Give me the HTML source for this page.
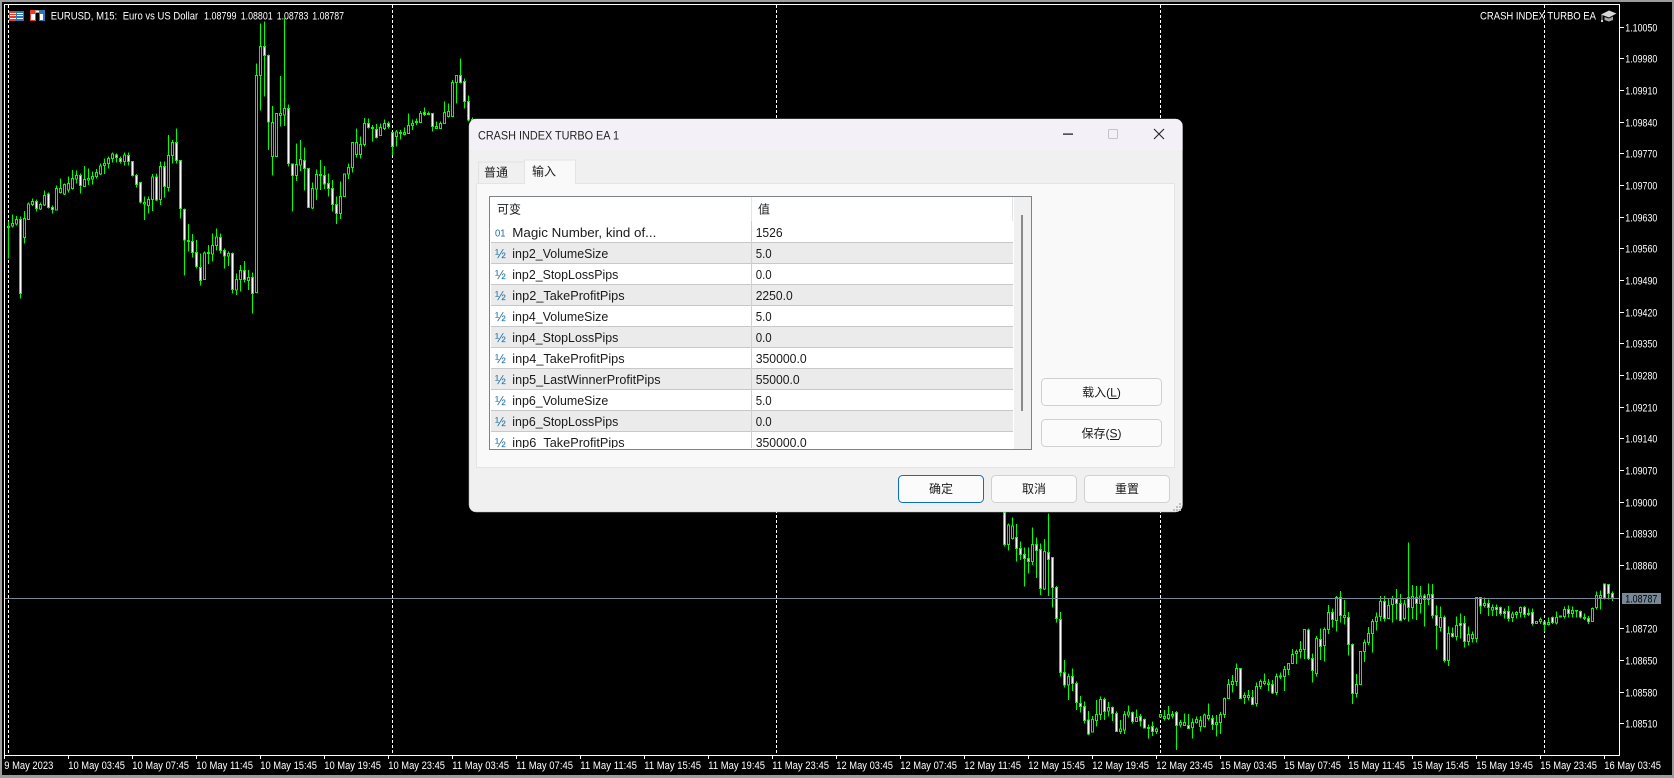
<!DOCTYPE html>
<html lang="zh"><head><meta charset="utf-8"><title>EURUSD M15</title>
<style>
html,body{margin:0;padding:0;background:#000;width:1674px;height:778px;overflow:hidden}
svg{display:block}
text{font-family:"Liberation Sans","Noto Sans CJK SC",sans-serif}
.a{fill:#fff;font-size:11px}
.d{fill:#1a1a1a;font-size:12px}
.r{fill:#1a1a1a;font-size:12.5px}
.i{fill:#1c6ea4;font-size:13px}
.wk{fill:none;stroke:#0f0;stroke-width:3}
.bw{fill:#fff;stroke:#0f0;stroke-width:3}
.bh{fill:#000;stroke:#0f0;stroke-width:3}
</style></head><body>
<svg width="1674" height="778" viewBox="0 0 1674 778" xmlns="http://www.w3.org/2000/svg">
<defs>
<clipPath id="lc"><rect x="491" y="197" width="522" height="251"/></clipPath>
<clipPath id="cc"><rect x="5" y="5" width="1614" height="750"/></clipPath>
</defs>
<rect width="1674" height="778" fill="#9c9c9c"/>
<rect x="2" y="2" width="1670" height="773" fill="#000"/>

<!-- grid -->
<path d="M8.5 5V755M392.5 5V755M776.5 5V755M1160.5 5V755M1544.5 5V755" stroke="#fff" stroke-width="1" stroke-dasharray="3 2" fill="none" shape-rendering="crispEdges"/>

<!-- candles -->
<g clip-path="url(#cc)" shape-rendering="crispEdges">
<g transform="translate(.167 0) scale(.33333)">
<path class="wk" d="M25 665V775M37 643V683M49 648V676M61 650V895M73 633V730M85 608V660M97 595V618M109 598V635M121 608V630M133 572V618M145 578V625M157 616V640M169 556V632M181 535V580M193 550V585M205 530V578M217 510V568M229 512V550M241 520V580M253 498V560M265 505V555M277 515V553M289 507V535M301 490V525M313 475V522M325 470V505M337 457V487M349 460V488M361 470V490M373 458V497M385 458V497M397 483V530M409 522V563M421 546V610M433 590V660M445 590V640M457 522V633M469 520V603M481 485V615M493 485V592M505 405V575M517 420V490M529 385V490M541 481V655M553 625V827M565 672V755M577 702V772M589 720V805M601 760V857M613 755V838M625 735V792M637 700V785M649 685V752M661 700V760M673 745V805M685 755V798M697 758V880M709 820V885M721 795V875M733 783V848M745 810V870M757 817V940M769 190V878M781 70V332M793 65V290M805 163V450M817 318V527M829 340V470M841 228V380M853 55V378M865 313V500M877 490V635M889 430V543M901 420V513M913 442V572M925 505V622M937 548V627M949 508V600M961 480V570M973 498V567M985 520V590M997 540V635M1009 590V672M1021 545V657M1033 520V590M1045 490V537M1057 427V517M1069 385V473M1081 410V475M1093 354V440M1105 355V385M1117 375V425M1129 372V415M1141 370V407M1153 358V390M1165 365V385M1177 397V465M1189 390V440M1201 390V418M1213 383V407M1225 340V400M1237 358V390M1249 355V375M1261 333V367M1273 322V348M1285 335V345M1297 340V395M1309 365V387M1321 365V385M1333 305V370M1345 310V352M1357 240V350M1369 226V310M1381 175V250M1393 235V325M1405 287V365M1417 352V370"/>
<path class="bw" d="M58 658V880h6V658zM106 604V625h6V604zM142 582V623h6V582zM154 622V628h6V622zM238 526V557h6V526zM346 465V473h6V465zM358 475V484h6V475zM382 466V485h6V466zM394 485V527h6V485zM406 526V553h6V526zM418 548V606h6V548zM466 531V600h6V531zM490 499V559h6V499zM526 427V482h6V427zM538 482V625h6V482zM550 628V720h6V628zM562 721V725h6V721zM574 725V757h6V725zM586 758V800h6V758zM598 802V842h6V802zM658 712V752h6V712zM670 752V768h6V752zM694 760V868h6V760zM730 811V838h6V811zM754 832V880h6V832zM790 140V166h6V140zM802 166V366h6V166zM862 325V490h6V325zM874 492V527h6V492zM910 481V506h6V481zM922 506V622h6V506zM970 526V552h6V526zM982 550V565h6V550zM994 566V613h6V566zM1006 613V640h6V613zM1102 370V382h6V370zM1126 388V412h6V388zM1162 370V380h6V370zM1174 397V440h6V397zM1270 338V344h6V338zM1294 341V380h6V341zM1378 226V248h6V226zM1390 245V305h6V245zM1402 305V360h6V305z"/>
<path class="bh" d="M22 680V682h6V680zM34 670V678h6V670zM46 658V672h6V658zM70 655V712h6V655zM82 612V658h6V612zM94 604V614h6V604zM118 613V627h6V613zM130 586V615h6V586zM166 565V630h6V565zM178 566V578h6V566zM190 553V582h6V553zM202 550V570h6V550zM214 535V566h6V535zM226 527V537h6V527zM250 538V560h6V538zM262 535V540h6V535zM274 530V537h6V530zM286 517V530h6V517zM298 498V522h6V498zM310 490V497h6V490zM322 475V490h6V475zM334 462V475h6V462zM370 465V485h6V465zM430 607V612h6V607zM442 598V617h6V598zM454 531V599h6V531zM478 499V598h6V499zM502 466V562h6V466zM514 427V467h6V427zM610 759V838h6V759zM622 757V760h6V757zM634 737V762h6V737zM646 711V737h6V711zM682 760V768h6V760zM706 838V870h6V838zM718 812V838h6V812zM742 832V842h6V832zM766 226V878h6V226zM778 140V226h6V140zM814 367V470h6V367zM826 340V470h6V340zM838 340V346h6V340zM850 325V345h6V325zM886 493V527h6V493zM898 478V495h6V478zM934 565V624h6V565zM946 523V567h6V523zM958 523V527h6V523zM1018 590V640h6V590zM1030 522V590h6V522zM1042 503V522h6V503zM1054 427V503h6V427zM1066 428V464h6V428zM1078 433V464h6V433zM1090 370V433h6V370zM1114 382V385h6V382zM1138 382V407h6V382zM1150 370V385h6V370zM1186 396V410h6V396zM1198 398V400h6V398zM1210 397V403h6V397zM1222 377V400h6V377zM1234 370V376h6V370zM1246 365V367h6V365zM1258 340V367h6V340zM1282 340V344h6V340zM1306 379V385h6V379zM1318 370V385h6V370zM1330 338V370h6V338zM1342 335V350h6V335zM1354 247V350h6V247zM1366 226V247h6V226zM1414 358V370h6V358z"/>
</g>
<g transform="translate(995.167 510) scale(.33333)">
<path class="wk" d="M28 0V110M40 40V122M52 22V88M64 42V155M76 95V150M88 112V230M100 113V190M112 52V165M124 82V204M136 100V255M148 87V240M160 10V258M172 142V293M184 228V338M196 306V500M208 450V533M220 490V570M232 475V543M244 515V600M256 558V608M268 575V640M280 603V675M292 618V668M304 570V650M316 560V630M328 563V630M340 576V620M352 590V633M364 605V665M376 630V672M388 603V672M400 586V622M412 605V640M424 598V636M436 612V650M448 625V656M460 643V686M472 635V678M484 653V672M496 612V622M508 600V632M520 588V630M532 603V625M544 603V720M556 630V653M568 610V648M580 612V657M592 625V686M604 620V640M616 618V665M628 610V652"/>
<path class="bw" d="M25 8V104h6V8zM61 82V115h6V82zM73 115V134h6V115zM85 133V146h6V133zM97 145V155h6V145zM121 103V122h6V103zM133 118V235h6V118zM157 127V149h6V127zM169 142V233h6V142zM181 232V326h6V232zM193 328V488h6V328zM205 487V525h6V487zM229 499V521h6V499zM241 520V578h6V520zM253 580V590h6V580zM265 589V632h6V589zM277 630V672h6V630zM325 568V605h6V568zM349 592V610h6V592zM361 610V665h6V610zM409 607V635h6V607zM433 619V633h6V619zM445 628V654h6V628zM457 652V656h6V652zM469 649V665h6V649zM541 607V647h6V607zM577 647V655h6V647z"/>
<path class="bh" d="M37 45V104h6V45zM49 48V86h6V48zM109 103V155h6V103zM145 124V237h6V124zM217 499V525h6V499zM289 628V666h6V628zM301 613V632h6V613zM313 568V613h6V568zM337 592V603h6V592zM373 657V665h6V657zM385 613V660h6V613zM397 606V615h6V606zM421 622V635h6V622zM481 657V665h6V657zM493 613V621h6V613zM505 619V626h6V619zM517 613V626h6V613zM529 613V618h6V613zM553 637V645h6V637zM565 637V647h6V637zM589 637V653h6V637zM601 629V638h6V629zM613 631V650h6V631zM625 615V650h6V615z"/>
</g>
<g transform="translate(1205.167 510) scale(.33333)">
<path class="wk" d="M10 580V632M22 615V660M34 615V680M46 606V672M58 562V624M70 507V567M82 495V548M94 460V528M106 474V566M118 547V582M130 540V572M142 540V584M154 517V590M166 508V537M178 490V525M190 507V543M202 510V552M214 490V555M226 487V507M238 468V543M250 460V495M262 417V462M274 418V462M286 393V445M298 357V447M310 355V450M322 430V518M334 378V500M346 355V450M358 353V455M370 285V372M382 295V353M394 258V365M406 243V338M418 270V343M430 306V437M442 400V582M454 492V563M466 424V523M478 388V456M490 351V405M502 327V428M514 307V362M526 258V333M538 258V335M550 265V326M562 258V338M574 237V328M586 252V332M598 270V330M610 98V335M622 225V327M634 252V329"/>
<path class="bw" d="M19 625V644h6V625zM103 475V566h6V475zM139 562V584h6V562zM199 523V549h6V523zM307 360V446h6V360zM319 446V482h6V446zM343 389V409h6V389zM379 307V329h6V307zM403 263V317h6V263zM427 322V403h6V322zM439 403V550h6V403zM535 275V326h6V275zM571 267V281h6V267zM583 281V332h6V281zM607 263V292h6V263zM631 263V281h6V263z"/>
<path class="bh" d="M7 616V626h6V616zM31 637V644h6V637zM43 613V638h6V613zM55 565V613h6V565zM67 523V566h6V523zM79 514V524h6V514zM91 475V515h6V475zM115 556V563h6V556zM127 556V563h6V556zM151 529V581h6V529zM163 514V530h6V514zM175 514V521h6V514zM187 519V524h6V519zM211 499V548h6V499zM223 498V501h6V498zM235 478V500h6V478zM247 460V479h6V460zM259 433V461h6V433zM271 424V431h6V424zM283 418V425h6V418zM295 358V419h6V358zM331 385V491h6V385zM355 358V407h6V358zM367 307V358h6V307zM391 263V331h6V263zM415 316V323h6V316zM451 523V551h6V523zM463 424V523h6V424zM475 397V425h6V397zM487 370V398h6V370zM499 334V371h6V334zM511 321V334h6V321zM523 275V320h6V275zM547 286V326h6V286zM559 267V283h6V267zM595 282V326h6V282zM619 260V292h6V260z"/>
</g>
<g transform="translate(1415.167 510) scale(.33333)">
<path class="wk" d="M4 228V330M16 228V310M28 252V350M40 220V285M52 222V325M64 286V418M76 290V365M88 317V458M100 350V468M112 352V383M124 320V392M136 310V385M148 318V413M160 350V407M172 365V397M184 262V398M196 262V312M208 262V293M220 268V318M232 283V318M244 284V318M256 290V316M268 295V325M280 288V335M292 305V336M304 303V325M316 290V322M328 288V322M340 295V318M352 296V347M364 334V342M376 322V342M388 335V365M400 322V346M412 320V342M424 305V343M436 318V323M448 290V325M460 287V322M472 290V322M484 300V322M496 302V325M508 310V330M520 318V342M532 292V335M544 245V298M556 242V298M568 220V268M580 222V268M592 245V273"/>
<path class="bw" d="M1 262V281h6V262zM25 258V268h6V258zM49 253V316h6V253zM61 317V347h6V317zM85 322V452h6V322zM109 370V380h6V370zM133 340V347h6V340zM145 340V395h6V340zM193 262V288h6V262zM217 280V292h6V280zM241 292V299h6V292zM253 292V311h6V292zM265 305V310h6V305zM277 305V326h6V305zM325 292V314h6V292zM337 310V314h6V310zM349 307V341h6V307zM385 336V344h6V336zM409 323V338h6V323zM457 298V311h6V298zM493 304V321h6V304zM505 322V326h6V322zM517 325V335h6V325zM565 222V264h6V222zM577 224V250h6V224zM589 250V263h6V250z"/>
<path class="bh" d="M13 258V281h6V258zM37 253V268h6V253zM73 322V352h6V322zM97 370V452h6V370zM121 346V380h6V346zM157 373V395h6V373zM169 373V386h6V373zM181 262V386h6V262zM205 280V287h6V280zM229 292V300h6V292zM289 312V323h6V312zM301 307V314h6V307zM313 292V308h6V292zM361 335V340h6V335zM373 328V335h6V328zM397 338V344h6V338zM421 322V339h6V322zM433 318V321h6V318zM445 298V320h6V298zM469 301V310h6V301zM481 301V303h6V301zM529 295V335h6V295zM541 256V292h6V256zM553 256V263h6V256z"/>
</g>
</g>

<!-- price line -->
<rect x="5" y="598" width="1614" height="1" fill="#778899"/>

<!-- axes -->
<g shape-rendering="crispEdges" fill="none" stroke="#fff" stroke-width="1">
<path d="M4.5 755.5V4.5H1619.5V755.5H4.5"/>
<path d="M4.5 755V759M68.5 755V759M132.5 755V759M196.5 755V759M260.5 755V759M324.5 755V759M388.5 755V759M452.5 755V759M516.5 755V759M580.5 755V759M644.5 755V759M708.5 755V759M772.5 755V759M836.5 755V759M900.5 755V759M964.5 755V759M1028.5 755V759M1092.5 755V759M1156.5 755V759M1220.5 755V759M1284.5 755V759M1348.5 755V759M1412.5 755V759M1476.5 755V759M1540.5 755V759M1604.5 755V759"/>
<path d="M1620 27.5h4M1620 58.5h4M1620 90.5h4M1620 122.5h4M1620 153.5h4M1620 185.5h4M1620 217.5h4M1620 248.5h4M1620 280.5h4M1620 312.5h4M1620 343.5h4M1620 375.5h4M1620 407.5h4M1620 438.5h4M1620 470.5h4M1620 502.5h4M1620 533.5h4M1620 565.5h4M1620 628.5h4M1620 660.5h4M1620 692.5h4M1620 723.5h4"/>
</g>

<!-- price labels -->
<text x="1625.3" y="31.3" textLength="32" lengthAdjust="spacingAndGlyphs" class="a">1.10050</text>
<text x="1625.3" y="62.3" textLength="32" lengthAdjust="spacingAndGlyphs" class="a">1.09980</text>
<text x="1625.3" y="94.3" textLength="32" lengthAdjust="spacingAndGlyphs" class="a">1.09910</text>
<text x="1625.3" y="126.3" textLength="32" lengthAdjust="spacingAndGlyphs" class="a">1.09840</text>
<text x="1625.3" y="157.3" textLength="32" lengthAdjust="spacingAndGlyphs" class="a">1.09770</text>
<text x="1625.3" y="189.3" textLength="32" lengthAdjust="spacingAndGlyphs" class="a">1.09700</text>
<text x="1625.3" y="221.3" textLength="32" lengthAdjust="spacingAndGlyphs" class="a">1.09630</text>
<text x="1625.3" y="252.3" textLength="32" lengthAdjust="spacingAndGlyphs" class="a">1.09560</text>
<text x="1625.3" y="284.3" textLength="32" lengthAdjust="spacingAndGlyphs" class="a">1.09490</text>
<text x="1625.3" y="316.3" textLength="32" lengthAdjust="spacingAndGlyphs" class="a">1.09420</text>
<text x="1625.3" y="347.7" textLength="32" lengthAdjust="spacingAndGlyphs" class="a">1.09350</text>
<text x="1625.3" y="379.3" textLength="32" lengthAdjust="spacingAndGlyphs" class="a">1.09280</text>
<text x="1625.3" y="411.3" textLength="32" lengthAdjust="spacingAndGlyphs" class="a">1.09210</text>
<text x="1625.3" y="442.3" textLength="32" lengthAdjust="spacingAndGlyphs" class="a">1.09140</text>
<text x="1625.3" y="474.3" textLength="32" lengthAdjust="spacingAndGlyphs" class="a">1.09070</text>
<text x="1625.3" y="506.3" textLength="32" lengthAdjust="spacingAndGlyphs" class="a">1.09000</text>
<text x="1625.3" y="537.3" textLength="32" lengthAdjust="spacingAndGlyphs" class="a">1.08930</text>
<text x="1625.3" y="569.3" textLength="32" lengthAdjust="spacingAndGlyphs" class="a">1.08860</text>
<text x="1625.3" y="632.3" textLength="32" lengthAdjust="spacingAndGlyphs" class="a">1.08720</text>
<text x="1625.3" y="664.3" textLength="32" lengthAdjust="spacingAndGlyphs" class="a">1.08650</text>
<text x="1625.3" y="696.3" textLength="32" lengthAdjust="spacingAndGlyphs" class="a">1.08580</text>
<text x="1625.3" y="727.3" textLength="32" lengthAdjust="spacingAndGlyphs" class="a">1.08510</text>
<rect x="1622" y="593" width="39" height="11" fill="#778899"/>
<text x="1625.3" y="602.5" textLength="32" lengthAdjust="spacingAndGlyphs" style="font-size:11px;fill:#000">1.08787</text>

<!-- time labels -->
<text class="a" lengthAdjust="spacingAndGlyphs" x="4.3" y="769" textLength="49">9 May 2023</text>
<text class="a" lengthAdjust="spacingAndGlyphs" x="68.3" y="769" textLength="56.7">10 May 03:45</text>
<text class="a" lengthAdjust="spacingAndGlyphs" x="132.3" y="769" textLength="56.7">10 May 07:45</text>
<text class="a" lengthAdjust="spacingAndGlyphs" x="196.3" y="769" textLength="56.7">10 May 11:45</text>
<text class="a" lengthAdjust="spacingAndGlyphs" x="260.3" y="769" textLength="56.7">10 May 15:45</text>
<text class="a" lengthAdjust="spacingAndGlyphs" x="324.3" y="769" textLength="56.7">10 May 19:45</text>
<text class="a" lengthAdjust="spacingAndGlyphs" x="388.3" y="769" textLength="56.7">10 May 23:45</text>
<text class="a" lengthAdjust="spacingAndGlyphs" x="452.3" y="769" textLength="56.7">11 May 03:45</text>
<text class="a" lengthAdjust="spacingAndGlyphs" x="516.3" y="769" textLength="56.7">11 May 07:45</text>
<text class="a" lengthAdjust="spacingAndGlyphs" x="580.3" y="769" textLength="56.7">11 May 11:45</text>
<text class="a" lengthAdjust="spacingAndGlyphs" x="644.3" y="769" textLength="56.7">11 May 15:45</text>
<text class="a" lengthAdjust="spacingAndGlyphs" x="708.3" y="769" textLength="56.7">11 May 19:45</text>
<text class="a" lengthAdjust="spacingAndGlyphs" x="772.3" y="769" textLength="56.7">11 May 23:45</text>
<text class="a" lengthAdjust="spacingAndGlyphs" x="836.3" y="769" textLength="56.7">12 May 03:45</text>
<text class="a" lengthAdjust="spacingAndGlyphs" x="900.3" y="769" textLength="56.7">12 May 07:45</text>
<text class="a" lengthAdjust="spacingAndGlyphs" x="964.3" y="769" textLength="56.7">12 May 11:45</text>
<text class="a" lengthAdjust="spacingAndGlyphs" x="1028.3" y="769" textLength="56.7">12 May 15:45</text>
<text class="a" lengthAdjust="spacingAndGlyphs" x="1092.3" y="769" textLength="56.7">12 May 19:45</text>
<text class="a" lengthAdjust="spacingAndGlyphs" x="1156.3" y="769" textLength="56.7">12 May 23:45</text>
<text class="a" lengthAdjust="spacingAndGlyphs" x="1220.3" y="769" textLength="56.7">15 May 03:45</text>
<text class="a" lengthAdjust="spacingAndGlyphs" x="1284.3" y="769" textLength="56.7">15 May 07:45</text>
<text class="a" lengthAdjust="spacingAndGlyphs" x="1348.3" y="769" textLength="56.7">15 May 11:45</text>
<text class="a" lengthAdjust="spacingAndGlyphs" x="1412.3" y="769" textLength="56.7">15 May 15:45</text>
<text class="a" lengthAdjust="spacingAndGlyphs" x="1476.3" y="769" textLength="56.7">15 May 19:45</text>
<text class="a" lengthAdjust="spacingAndGlyphs" x="1540.3" y="769" textLength="56.7">15 May 23:45</text>
<text class="a" lengthAdjust="spacingAndGlyphs" x="1604.3" y="769" textLength="56.7">16 May 03:45</text>

<!-- header icons and text -->
<g shape-rendering="crispEdges">
<rect x="9" y="11" width="8" height="10" fill="#e63c28"/>
<rect x="16" y="11" width="8" height="10" fill="#2a78b8"/>
<path d="M10 13h6v1h-6zM10 15h6v1h-6zM10 18h6v1h-6zM17 13h6v1h-6zM17 15h6v1h-6zM17 18h6v1h-6z" fill="#fff"/>
<rect x="30" y="10" width="6" height="11" fill="#e63c28"/>
<rect x="31" y="14" width="4" height="6" fill="#fff"/>
<rect x="35" y="10" width="5" height="3" fill="#9a9a9a"/>
<rect x="36" y="11" width="3" height="1" fill="#fff"/>
<rect x="39" y="10" width="6" height="11" fill="#2a78b8"/>
<rect x="40" y="14" width="3" height="6" fill="#fff"/>
</g>
<text class="a" lengthAdjust="spacingAndGlyphs" x="50.7" y="19.5" textLength="66.5">EURUSD, M15:</text>
<text class="a" lengthAdjust="spacingAndGlyphs" x="122.7" y="19.5" textLength="75.5">Euro vs US Dollar</text>
<text class="a" lengthAdjust="spacingAndGlyphs" x="204" y="19.5" textLength="32.5">1.08799</text>
<text class="a" lengthAdjust="spacingAndGlyphs" x="240.7" y="19.5" textLength="32">1.08801</text>
<text class="a" lengthAdjust="spacingAndGlyphs" x="276.7" y="19.5" textLength="31.7">1.08783</text>
<text class="a" lengthAdjust="spacingAndGlyphs" x="312.3" y="19.5" textLength="31.7">1.08787</text>
<text class="a" lengthAdjust="spacingAndGlyphs" x="1480" y="19.5" textLength="116">CRASH INDEX TURBO EA</text>
<path d="M1601 14.5L1609 10.5L1616.5 13.5L1609 17.5Z" fill="#d8d8d8"/>
<path d="M1604.500 17V20L1609 21.500L1613 20V16.500L1609 18.500Z" fill="#a8a8a8"/>
<rect x="1601.5" y="15" width="1" height="5" fill="#aaa"/>
<rect x="1601" y="20" width="2" height="2" fill="#ccc"/>

<!-- dialog -->
<rect x="469" y="119" width="713.5" height="393" rx="7" fill="#f0f0f0" stroke="#b8b8b8" stroke-width=".5"/>
<path d="M469.3 150V126a7 7 0 0 1 7-7H1175.5a7 7 0 0 1 7 7V150Z" fill="#f3f1f7"/>
<text x="478" y="139.5" textLength="141" lengthAdjust="spacingAndGlyphs" style="fill:#222;font-size:12px">CRASH INDEX TURBO EA 1</text>
<rect x="1063" y="133.5" width="10" height="1.2" fill="#111"/>
<rect x="1108.5" y="129.5" width="9" height="9" rx="1" fill="none" stroke="#c4c4c4"/>
<path d="M1154 129L1164 139M1164 129L1154 139" stroke="#222" stroke-width="1.1" fill="none"/>

<!-- tabs -->
<rect x="478.5" y="162" width="46" height="22" fill="#f0f0f0" stroke="#e2e2e2"/>
<rect x="476.5" y="183.5" width="698" height="284" fill="#f9f9f9" stroke="#e4e4e4" shape-rendering="crispEdges"/>
<path d="M524.5 184V160H575.5V184" fill="#f9f9f9" stroke="#e4e4e4" shape-rendering="crispEdges"/>
<rect x="525" y="182" width="50" height="3" fill="#f9f9f9"/>
<text class="d" x="484" y="176.5">普通</text>
<text class="d" x="532" y="175.5">输入</text>

<!-- list -->
<rect x="489.5" y="196.5" width="542" height="253" fill="#fff" stroke="#7e8388" shape-rendering="crispEdges"/>
<rect x="1014" y="197" width="17" height="252" fill="#f0f0f0"/>
<g shape-rendering="crispEdges">
<rect x="491" y="243" width="522" height="20" fill="#ebebeb"/>
<rect x="491" y="285" width="522" height="20" fill="#ebebeb"/>
<rect x="491" y="327" width="522" height="20" fill="#ebebeb"/>
<rect x="491" y="369" width="522" height="20" fill="#ebebeb"/>
<rect x="491" y="411" width="522" height="20" fill="#ebebeb"/>
<path d="M491 242.5h522M491 263.5h522M491 284.5h522M491 305.5h522M491 326.5h522M491 347.5h522M491 368.5h522M491 389.5h522M491 410.5h522M491 431.5h522" stroke="#c8c8c8" stroke-width="1"/>
<path d="M751.5 197V221" stroke="#e4e4e4"/>
<path d="M751.5 221V448" stroke="#d0d0d0"/>
<path d="M1012.5 197V221" stroke="#e4e4e4"/>
<rect x="1021" y="215" width="2" height="196" fill="#8a8a8a"/>
</g>
<text class="d" x="497" y="213.5">可变</text>
<text class="d" x="758" y="213.5">值</text>
<g clip-path="url(#lc)">
<text x="495" y="236.5" textLength="10.5" lengthAdjust="spacingAndGlyphs" style="font-size:10.5px;fill:#1c6ea4">01</text>
<text class="i" x="495" y="258">½</text>
<text class="i" x="495" y="279">½</text>
<text class="i" x="495" y="300">½</text>
<text class="i" x="495" y="321">½</text>
<text class="i" x="495" y="342">½</text>
<text class="i" x="495" y="363">½</text>
<text class="i" x="495" y="384">½</text>
<text class="i" x="495" y="405">½</text>
<text class="i" x="495" y="426">½</text>
<text class="i" x="495" y="447">½</text>
<text class="r" lengthAdjust="spacingAndGlyphs" x="512.3" y="237" textLength="144" style="font-size:13px">Magic Number, kind of...</text>
<text class="r" lengthAdjust="spacingAndGlyphs" x="512.3" y="258" textLength="96">inp2_VolumeSize</text>
<text class="r" lengthAdjust="spacingAndGlyphs" x="512.3" y="279" textLength="106">inp2_StopLossPips</text>
<text class="r" lengthAdjust="spacingAndGlyphs" x="512.3" y="300" textLength="112.3">inp2_TakeProfitPips</text>
<text class="r" lengthAdjust="spacingAndGlyphs" x="512.3" y="321" textLength="96">inp4_VolumeSize</text>
<text class="r" lengthAdjust="spacingAndGlyphs" x="512.3" y="342" textLength="106">inp4_StopLossPips</text>
<text class="r" lengthAdjust="spacingAndGlyphs" x="512.3" y="363" textLength="112.3">inp4_TakeProfitPips</text>
<text class="r" lengthAdjust="spacingAndGlyphs" x="512.3" y="384" textLength="148.3">inp5_LastWinnerProfitPips</text>
<text class="r" lengthAdjust="spacingAndGlyphs" x="512.3" y="405" textLength="96">inp6_VolumeSize</text>
<text class="r" lengthAdjust="spacingAndGlyphs" x="512.3" y="426" textLength="106">inp6_StopLossPips</text>
<text class="r" lengthAdjust="spacingAndGlyphs" x="512.3" y="447" textLength="112.3">inp6_TakeProfitPips</text>
<text class="r" lengthAdjust="spacingAndGlyphs" x="755.7" y="237" textLength="27">1526</text>
<text class="r" lengthAdjust="spacingAndGlyphs" x="755.7" y="258" textLength="16">5.0</text>
<text class="r" lengthAdjust="spacingAndGlyphs" x="755.7" y="279" textLength="16">0.0</text>
<text class="r" lengthAdjust="spacingAndGlyphs" x="755.7" y="300" textLength="37">2250.0</text>
<text class="r" lengthAdjust="spacingAndGlyphs" x="755.7" y="321" textLength="16">5.0</text>
<text class="r" lengthAdjust="spacingAndGlyphs" x="755.7" y="342" textLength="16">0.0</text>
<text class="r" lengthAdjust="spacingAndGlyphs" x="755.7" y="363" textLength="51">350000.0</text>
<text class="r" lengthAdjust="spacingAndGlyphs" x="755.7" y="384" textLength="44">55000.0</text>
<text class="r" lengthAdjust="spacingAndGlyphs" x="755.7" y="405" textLength="16">5.0</text>
<text class="r" lengthAdjust="spacingAndGlyphs" x="755.7" y="426" textLength="16">0.0</text>
<text class="r" lengthAdjust="spacingAndGlyphs" x="755.7" y="447" textLength="51">350000.0</text>
</g>

<!-- buttons -->
<rect x="1041.5" y="378.5" width="120" height="27" rx="4" fill="#fbfbfb" stroke="#d0d0d0"/>
<rect x="1041.5" y="419.5" width="120" height="27" rx="4" fill="#fbfbfb" stroke="#d0d0d0"/>
<text class="d" x="1101.5" y="396.5" text-anchor="middle">载入(L)</text>
<text class="d" x="1101.5" y="437.5" text-anchor="middle">保存(S)</text>
<rect x="1109.5" y="398" width="8" height="1" fill="#1a1a1a"/>
<rect x="1110" y="439" width="9" height="1" fill="#1a1a1a"/>
<rect x="898.5" y="475.5" width="85" height="27" rx="4" fill="#fbfbfb" stroke="#0a6fc2"/>
<rect x="991.5" y="475.5" width="85" height="27" rx="4" fill="#fbfbfb" stroke="#d0d0d0"/>
<rect x="1084.5" y="475.5" width="85" height="27" rx="4" fill="#fbfbfb" stroke="#d0d0d0"/>
<text class="d" x="941" y="493" text-anchor="middle">确定</text>
<text class="d" x="1034" y="493" text-anchor="middle">取消</text>
<text class="d" x="1127" y="493" text-anchor="middle">重置</text>

<!-- grip -->
<path d="M1179 503h2v2h-2zM1176 506h2v2h-2zM1179 506h2v2h-2zM1173 509h2v2h-2zM1176 509h2v2h-2zM1179 509h2v2h-2z" fill="#bdbdbd" shape-rendering="crispEdges"/>
</svg>
</body></html>
